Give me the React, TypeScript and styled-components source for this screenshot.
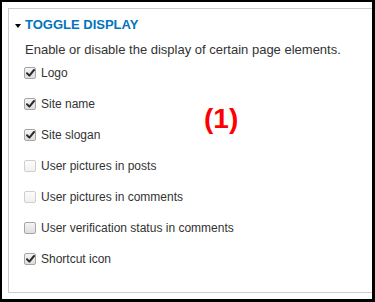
import React from "react";
import styled, { createGlobalStyle } from "styled-components";

const Global = createGlobalStyle`
  html, body { margin: 0; padding: 0; background: #fff; }
  body { font-family: "Liberation Sans", Arial, sans-serif; }
`;

const Frame = styled.div`
  position: relative;
  box-sizing: border-box;
  width: 375px;
  height: 302px;
  border-style: solid;
  border-color: #000;
  border-width: 2px 3px 3px 2px;
  background: #fff;
  padding: 6px 0 6px 6px;
  overflow: hidden;
`;

const Fieldset = styled.section`
  box-sizing: border-box;
  height: 285px;
  border: 1px solid #ccc;
  border-right: none;
  padding: 8px 0 0 6px;
`;

const Legend = styled.div`
  display: flex;
  align-items: center;
  gap: 4px;
  font-size: 13px;
  line-height: 16px;
  font-weight: bold;
  text-transform: uppercase;
  color: #0074bd;
`;

const Caret = styled.span`
  width: 0;
  height: 0;
  border-left: 3.5px solid transparent;
  border-right: 3.5px solid transparent;
  border-top: 4px solid #000;
  margin-top: 1px;
`;

const Body = styled.div`
  padding-left: 10px;
  color: #333;
  font-size: 13px;
  line-height: 16px;
`;

const Description = styled.p`
  margin: 9px 0 7px;
`;

const List = styled.div`
  display: flex;
  flex-direction: column;
  gap: 15px;
  margin-left: -1px;
`;

const Row = styled.label`
  display: flex;
  align-items: center;
  gap: 5px;
  height: 16px;
  font-size: 12px;
  color: #333;
`;

const Box = styled.span<{ $disabled?: boolean }>`
  box-sizing: border-box;
  width: 12px;
  height: 12px;
  border-radius: 2px;
  border: 1px solid ${(p) => (p.$disabled ? "#cfcfcf" : "#a6a6a6")};
  background: ${(p) =>
    p.$disabled
      ? "linear-gradient(#fcfcfc, #f0f0f0)"
      : "linear-gradient(#f4f4f4, #dedede)"};
  display: flex;
  align-items: center;
  justify-content: center;
`;

const Note = styled.div`
  position: absolute;
  left: 202px;
  top: 103px;
  font-family: "Liberation Sans", Arial, sans-serif;
  font-weight: bold;
  font-size: 28px;
  line-height: 1;
  color: #f00;
`;

const Check = () => (
  <svg width="9" height="8" viewBox="0 0 9 8">
    <path d="M1 4.2 L3.4 6.6 L8 1" fill="none" stroke="#2b2b2b" strokeWidth="2" strokeLinecap="round" strokeLinejoin="round" />
  </svg>
);

const items: { label: string; checked: boolean; disabled?: boolean }[] = [
  { label: "Logo", checked: true },
  { label: "Site name", checked: true },
  { label: "Site slogan", checked: true },
  { label: "User pictures in posts", checked: false, disabled: true },
  { label: "User pictures in comments", checked: false, disabled: true },
  { label: "User verification status in comments", checked: false },
  { label: "Shortcut icon", checked: true },
];

export default function App() {
  return (
    <>
      <Global />
      <Frame>
        <Fieldset>
          <Legend>
            <Caret />
            Toggle display
          </Legend>
          <Body>
            <Description>Enable or disable the display of certain page elements.</Description>
            <List>
              {items.map((it) => (
                <Row key={it.label}>
                  <Box $disabled={it.disabled}>
                    {it.checked && <Check />}
                  </Box>
                  {it.label}
                </Row>
              ))}
            </List>
          </Body>
        </Fieldset>
        <Note>(1)</Note>
      </Frame>
    </>
  );
}
